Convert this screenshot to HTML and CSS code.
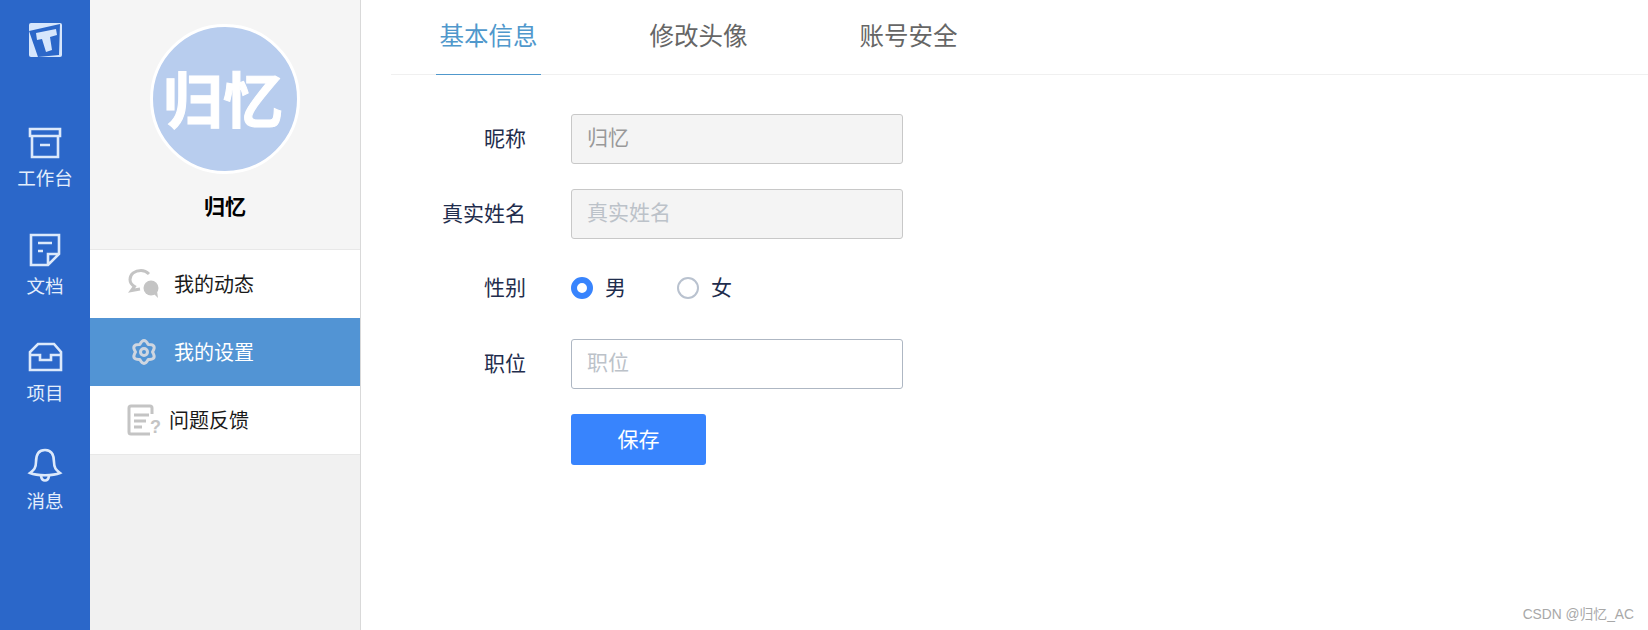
FILE: index.html
```html
<!DOCTYPE html>
<html lang="zh">
<head>
  <meta charset="utf-8">
  <title>我的设置</title>
  <link rel="stylesheet" href="styles.css">
</head>
<body>
  <nav class="rail">
    <svg class="logo" viewBox="0 0 34 34">
      <rect class="logo-bg" width="33" height="34" rx="2"/>
      <path class="logo-band" d="M0 8 31 1 30 32 9 34Z"/>
      <path class="logo-bg" d="M7 10 27 6 28 12 21 14 23 27 17 29 13 16 8 17Z"/>
    </svg>

    <a class="rail-item rail-first">
      <svg viewBox="0 0 34 32"><path d="M2 2H32V9H2ZM4 9V30H30V9M12 18H22"/></svg>
      <span>工作台</span>
    </a>
    <a class="rail-item">
      <svg viewBox="0 0 34 32"><path d="M3 0H31V19L20 30H3ZM31 19H20V30M10 8H24M10 16H15"/></svg>
      <span>文档</span>
    </a>
    <a class="rail-item">
      <svg viewBox="0 0 34 32"><path d="M10 2H26L33 10V28H2V10ZM2 13H12V18H23V13H33"/></svg>
      <span>项目</span>
    </a>
    <a class="rail-item">
      <svg viewBox="0 0 34 32"><path d="M17 0C9 0 8 7 8 12C8 18 6 20 2 23C9 26 25 26 32 23C28 20 26 18 26 12C26 7 25 0 17 0ZM13 26C14 32 20 32 21 26"/></svg>
      <span>消息</span>
    </a>
  </nav>

  <aside class="side">
    <div class="profile">
      <div class="avatar">归忆</div>
      <div class="name">归忆</div>
    </div>
    <ul class="menu">
      <li class="menu-item">
        <svg class="menu-icon" viewBox="0 0 32 30">
          <path class="line" d="M21 5C18 2 15 1.500 13 1.500C7 1.500 2 5 2 10.500C2 13.500 4 16 6.500 17.500L3.500 21.500 12 20"/>
          <circle class="solid" cx="23" cy="19" r="7.500"/>
          <path class="solid" d="M25 24 30 29 29 22Z"/>
        </svg>
        <span>我的动态</span>
      </li>
      <li class="menu-item active">
        <svg class="menu-icon" viewBox="0 0 32 30">
          <path class="line gear" d="M11.750 7.600Q16 -.5 20.250 7.600Q29.400 7.250 24.500 15Q29.400 22.750 20.250 22.400Q16 30.500 11.750 22.400Q2.600 22.750 7.500 15Q2.600 7.250 11.750 7.600Z"/>
          <circle class="line gear" cx="16" cy="15" r="3.500"/>
        </svg>
        <span>我的设置</span>
      </li>
      <li class="menu-item tight">
        <svg class="menu-icon" viewBox="0 0 32 30">
          <path class="line" d="M24 9V3Q24 1 22 1H3Q1 1 1 3V27Q1 29 3 29H22"/>
          <path class="line" d="M6 10H21M6 16H18M6 22H14"/>
          <text class="qmark" x="22" y="28">?</text>
        </svg>
        <span>问题反馈</span>
      </li>
    </ul>
  </aside>

  <main class="content">
    <div class="tabs">
      <a class="tab current">基本信息</a>
      <a class="tab">修改头像</a>
      <a class="tab">账号安全</a>
    </div>

    <form class="form">
      <div class="row">
        <label class="row-label">昵称</label>
        <input class="field" type="text" value="归忆" disabled>
      </div>
      <div class="row">
        <label class="row-label">真实姓名</label>
        <input class="field" type="text" placeholder="真实姓名" disabled>
      </div>
      <div class="row radio-row">
        <label class="row-label">性别</label>
        <span class="radio checked"></span><span class="radio-text">男</span>
        <span class="radio"></span><span class="radio-text">女</span>
      </div>
      <div class="row">
        <label class="row-label">职位</label>
        <input class="field" type="text" placeholder="职位">
      </div>
      <div class="row">
        <span class="row-label"></span>
        <button class="save" type="button">保存</button>
      </div>
    </form>
  </main>

  <div class="watermark">CSDN @归忆_AC</div>
</body>
</html>
```

FILE: styles.css
```css
* {
  box-sizing: border-box;
}

html, body {
  height: 100%;
}

body {
  margin: 0;
  display: flex;
  height: 630px;
  overflow: hidden;
  position: relative;
  font-family: "Noto Sans CJK SC", sans-serif;
  color: #1f2d4d;
  background: #fff;
}

/* left blue rail */
.rail {
  width: 90px;
  flex: none;
  background: #2b67c9;
  display: flex;
  flex-direction: column;
  align-items: center;
  padding-top: 23px;
}

.logo {
  width: 34px;
  height: 34px;
  margin-left: 1px;
}

.logo-bg {
  fill: #d6e6fc;
}

.logo-band {
  fill: #2b67c9;
}

.rail-item {
  display: flex;
  flex-direction: column;
  align-items: center;
  height: 107.600px;
  color: #e4eefc;
  font-size: 18.500px;
  line-height: 26px;
}

.rail-first {
  margin-top: 71px;
}

.rail-item svg {
  width: 34px;
  height: 32px;
  margin-top: -1px;
  margin-bottom: 5px;
  overflow: visible;
  fill: none;
  stroke: #dce9fb;
  stroke-width: 2.600;
}

/* profile column */
.side {
  width: 271px;
  flex: none;
  background: #f1f1f1;
  border-right: 1px solid #d9d9d9;
}

.profile {
  height: 249px;
  background: #f5f5f5;
  padding-top: 24px;
  display: flex;
  flex-direction: column;
  align-items: center;
}

.avatar {
  width: 150px;
  height: 150px;
  border-radius: 50%;
  border: 3px solid #fff;
  padding-right: 4px;
  background: #b8cdee;
  color: #fff;
  font-size: 60px;
  font-weight: 700;
  -webkit-text-stroke: 1px #fff;
  line-height: 140px;
  text-align: center;
}

.name {
  margin-top: 17px;
  font-size: 21px;
  font-weight: 700;
  line-height: 28px;
  color: #000;
}

.menu {
  list-style: none;
  margin: 0;
  padding: 0;
  border-top: 1px solid #e8e8e8;
  border-bottom: 1px solid #e8e8e8;
}

.menu-item {
  height: 68px;
  background: #fff;
  display: flex;
  align-items: center;
  padding-left: 38px;
  font-size: 20px;
  color: #1a1a1a;
}

.menu-item span {
  margin-left: 14px;
  padding-bottom: 2px;
}

.menu-item.tight span {
  margin-left: 9px;
}

.menu-item.active {
  background: #5294d4;
  color: #fff;
}

.menu-icon {
  width: 32px;
  height: 30px;
  overflow: visible;
}

.line {
  fill: none;
  stroke: #c4c4c4;
  stroke-width: 3;
}

.line.gear {
  stroke: #cfd6e0;
  stroke-linejoin: round;
}

.solid {
  fill: #c4c4c4;
}

.qmark {
  fill: #c4c4c4;
  font-size: 18px;
  font-weight: 700;
  font-family: "Liberation Sans", sans-serif;
}

/* main area */
.content {
  flex: 1;
  padding-left: 30px;
}

.tabs {
  display: flex;
  height: 75px;
  border-bottom: 1px solid #f0f0f0;
}

.tab {
  width: 105px;
  height: 75px;
  margin-right: 105px;
  text-align: center;
  font-size: 24.500px;
  line-height: 69px;
  color: #666;
}

.tabs .tab:first-child {
  margin-left: 45px;
}

.tab.current {
  color: #5098cc;
  border-bottom: 1px solid #5098cc;
}

.form {
  padding-top: 39px;
}

.row {
  display: flex;
  align-items: center;
  height: 50px;
  margin-bottom: 25px;
  font-size: 21px;
}

.radio-row {
  padding-bottom: 2px;
}

.row-label {
  width: 135px;
  margin-right: 45px;
  padding-bottom: 4px;
  text-align: right;
}

.field {
  width: 332px;
  height: 50px;
  padding: 0 15px 6px;
  border: 1px solid #aeb7c3;
  border-radius: 3px;
  font: inherit;
  background: #fff;
  color: #999;
  outline: none;
}

.field::placeholder {
  color: #bcc2c9;
  opacity: 1;
}

.field:disabled {
  background: #f4f4f4;
  border-color: #c8c8c8;
  color: #999;
}

.radio {
  width: 22px;
  height: 22px;
  border-radius: 50%;
  border: 2px solid #b9c2cf;
  background: #fff;
}

.radio.checked {
  border: 6px solid #3884fd;
}

.radio-text {
  margin-left: 12px;
  margin-right: 51px;
  padding-bottom: 4px;
}

.save {
  width: 135px;
  height: 51px;
  padding: 0 0 2px;
  border: none;
  border-radius: 3px;
  background: #3884fd;
  color: #fff;
  font: inherit;
}

.watermark {
  position: absolute;
  right: 14px;
  bottom: 7px;
  font-family: "Liberation Sans", "Noto Sans CJK SC", sans-serif;
  font-size: 13.800px;
  color: #a8a8a8;
}
```
